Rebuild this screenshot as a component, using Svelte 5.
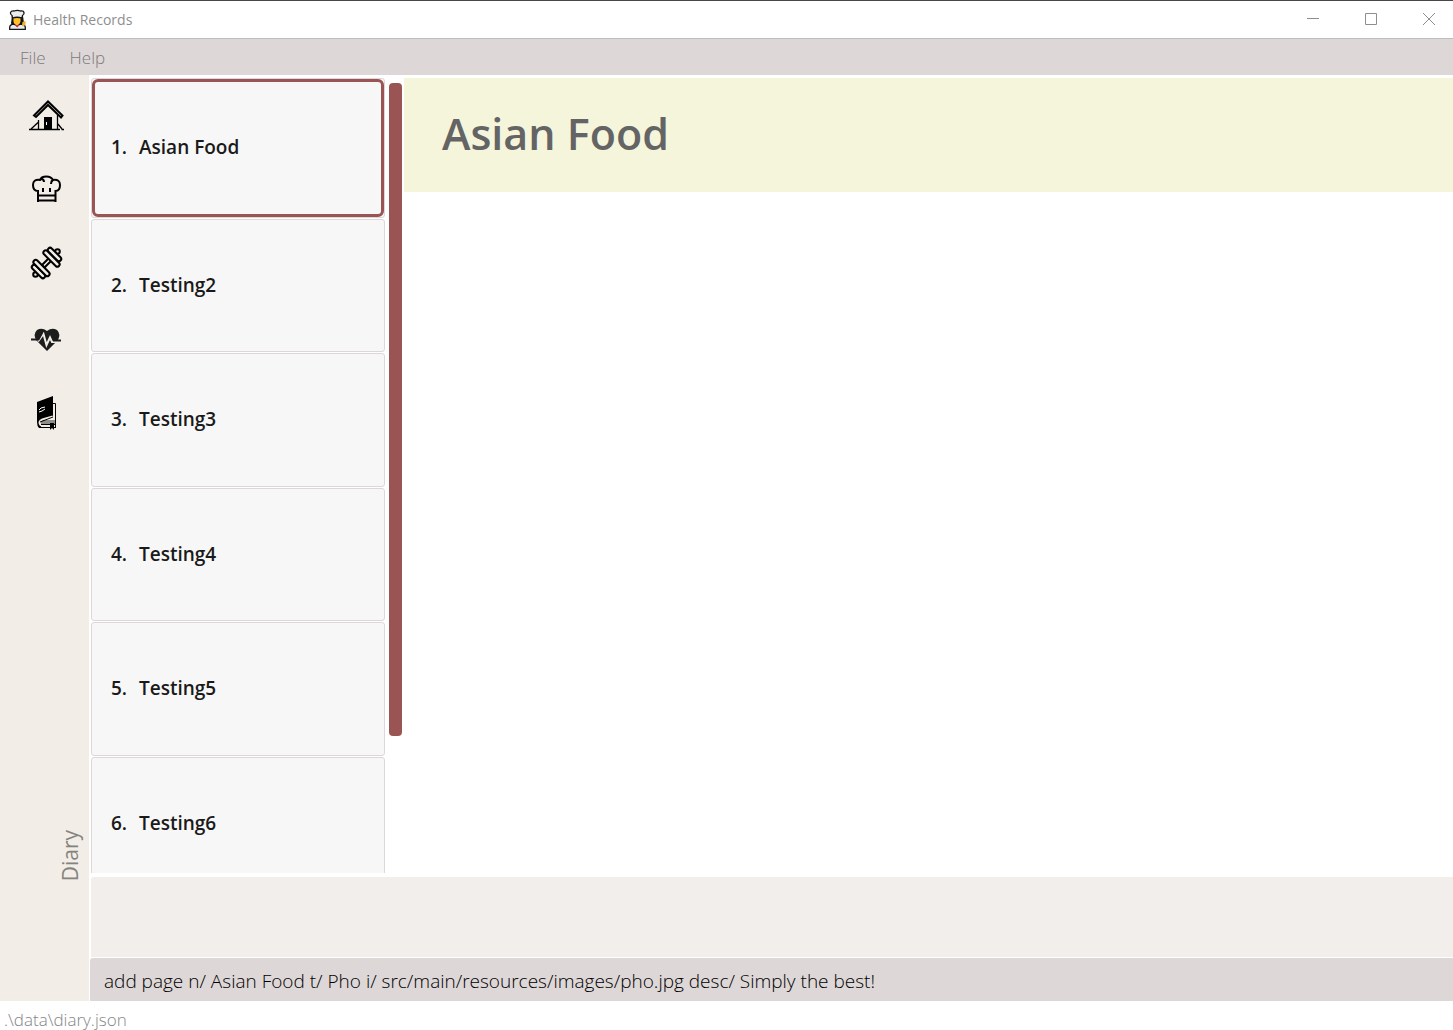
<script>
  const pages = ['Asian Food', 'Testing2', 'Testing3', 'Testing4', 'Testing5', 'Testing6'];
  let selected = $state(0);
  let command = $state('add page n/ Asian Food t/ Pho i/ src/main/resources/images/pho.jpg desc/ Simply the best!');
</script>

<div class="window">
  <header class="titlebar">
    <svg class="logo" viewBox="8 8 20 22" aria-hidden="true">
      <path d="M12 15H23L24 22L22 25H12L11 22Z" fill="#151515" />
      <path d="M9.700 28.300V26Q10 23.500 14 23L17 25L20 23Q25 23.500 25.300 26V28.300Z" fill="#e6ebef" stroke="#151515" stroke-width="1.300" />
      <path d="M13.500 16H20.500V20.500Q20 23 18.500 23.300V24.500H15.500V23.300Q13.700 23 13.500 20.500Z" fill="#ffc02e" />
      <path d="M22.500 21L25.500 20V23.500L23.500 25.500L22 24Z" fill="#f5ae25" />
      <path d="M12.500 17L12 14.500Q10 13.500 10.500 11.500Q11.500 9.500 14 10Q17.500 8.800 20.500 10Q23.500 9.500 24 11.500Q24.500 13.500 22.500 14.500L22 17Q17 15.500 12.500 17Z" fill="#ececec" stroke="#151515" stroke-width="1.300" />
      <path d="M14.500 24H19.500L17.500 26.500Z" fill="#e0342e" />
    </svg>
    <span class="title">Health Records</span>
    <div class="controls">
      <button aria-label="Minimize"><svg viewBox="0 0 12 12"><path d="M0 5.5H12" /></svg></button>
      <button aria-label="Maximize"><svg viewBox="0 0 12 12"><path d="M.5 .5H11.5V11.5H.5Z" /></svg></button>
      <button aria-label="Close"><svg viewBox="0 0 12 12"><path d="M0 0L12 12M12 0L0 12" /></svg></button>
    </div>
  </header>

  <nav class="menubar" aria-label="Menu">
    <button>File</button>
    <button>Help</button>
  </nav>

  <div class="body">
    <aside class="sidebar">
      <button aria-label="Home">
        <svg viewBox="20 90 52 52">
          <path d="M29 129.500H60M61.500 129.500H64M38.500 120V129M31 129L38 122.500M57.500 115V129M58 124L62 129" stroke="#000" stroke-width="1.300" fill="none" />
          <path d="M34 115.500L48 101.500L62.500 115.500L61 117.500L48 105L36 117Z" fill="#f2ede6" stroke="#000" stroke-width="2" />
          <path d="M44 117H52V129H44Z" fill="#000" />
          <path d="M46 122H47V125H46Z" fill="#fff" />
        </svg>
      </button>
      <button aria-label="Recipes">
        <svg viewBox="20 165 52 52">
          <path d="M38 202V191Q33 191 33 185Q33 179 40 180Q41 176.500 46.500 176.500Q51 176.500 53 180Q60 179 60 185Q60 191 55.500 191V202M37 200.500H56.500M38 195.500H56M41 179Q44 179 44 182M53 180Q51 181 51 184" fill="none" stroke="#000" stroke-width="2" />
          <path d="M43 188V192M50 188V192" stroke="#000" stroke-width="2" />
        </svg>
      </button>
      <button aria-label="Exercise">
        <svg viewBox="20 240 52 52">
          <g fill="#f2ede6" stroke="#000" stroke-width="2">
            <path d="M42 265L50 257L52.500 259.500L44.500 267.500Z" />
            <circle cx="57.500" cy="251.500" r="2.300" />
            <circle cx="35.500" cy="274.500" r="2.300" />
            <rect x="-8.500" y="-2.300" width="17" height="4.600" rx="2.300" transform="translate(54.500 254.500) rotate(45)" />
            <rect x="-10.500" y="-2.300" width="21" height="4.600" rx="2.300" transform="translate(51.500 258.500) rotate(45)" />
            <rect x="-8.500" y="-2.300" width="17" height="4.600" rx="2.300" transform="translate(38.500 271.500) rotate(45)" />
            <rect x="-10.500" y="-2.300" width="21" height="4.600" rx="2.300" transform="translate(41.500 268) rotate(45)" />
          </g>
        </svg>
      </button>
      <button aria-label="Health">
        <svg viewBox="20 315 52 52">
          <path d="M47 351L36 340Q33 334 37 330Q42 327 47 331Q52 327 57 330Q61 334 58 340Z" fill="#1e1d1d" />
          <path d="M38 341.500L43.500 334L46.500 345L50 337.500L52 342H58" fill="none" stroke="#f2ede6" stroke-width="2" />
          <path d="M31 339.500H38.500L42 333M53 340.500H61" fill="none" stroke="#1e1d1d" stroke-width="2" />
        </svg>
      </button>
      <button aria-label="Diary">
        <svg viewBox="20 390 52 52">
          <path d="M53 403.500H55.500V427M39 427.500H56M41 424.500H55" fill="none" stroke="#000" />
          <path d="M40 420H55V424H41Z" fill="#8d8d89" />
          <path d="M37 402L53 396V416L41 420Q39 422 40 425L42 428H39Q37 426 37 422Z" fill="#000" />
          <path d="M38.500 422Q39 419.500 42 418.500L52.500 415.500V417.500L43 420Q40 421 40.500 424L42 426.500Q38.500 426 38.500 422Z" fill="#f2ede6" />
          <path d="M40 422L53 417" fill="none" stroke="#000" />
          <path d="M39 410L41 408L45 407M39 412L42 411L45 409" fill="none" stroke="#fff" />
          <path d="M50 423H54V430L52 428L50 430Z" fill="#000" />
        </svg>
      </button>
      <span class="tab">Diary</span>
    </aside>

    <main class="content">
      <div class="upper">
        <ol class="list">
          {#each pages as page, i}
            <li class:selected={selected === i}>
              <button onclick={() => (selected = i)}>
                <span class="num">{i + 1}.</span>
                <span>{page}</span>
              </button>
            </li>
          {/each}
        </ol>
        <div class="track"><div class="thumb"></div></div>
        <section class="page">
          <h1>{pages[selected]}</h1>
        </section>
      </div>
      <div class="result" role="status"></div>
      <input class="command" aria-label="Command" bind:value={command} />
    </main>
  </div>

  <footer>.\data\diary.json</footer>
</div>

<style>
  :global(body) { background: #fff; }
  .window {
    display: flex;
    flex-direction: column;
    height: 100vh;
    font-family: "Segoe UI", "Open Sans", "Noto Sans", sans-serif;
    overflow: hidden;
  }
  button { border: 0; padding: 0; background: none; font: inherit; color: inherit; }
  .titlebar {
    display: flex;
    align-items: center;
    flex: none;
    box-sizing: border-box;
    height: 39px;
    padding-left: 8px;
    border-top: 1px solid #484848;
    border-bottom: 1px solid #bebebe;
  }
  .logo { width: 20px; height: 22px; }
  .title { margin-left: 5px; font-size: 14px; color: #8f8f8f; }
  .controls { display: flex; align-self: stretch; margin-left: auto; margin-right: -5px; padding-bottom: 2px; }
  .controls button { display: flex; align-items: center; justify-content: center; width: 58px; }
  .controls svg { width: 12px; height: 12px; stroke: #8e8e8e; fill: none; }
  .menubar {
    display: flex;
    align-items: center;
    flex: none;
    gap: 24px;
    height: 36px;
    padding-left: 20px;
    background: #ddd7d7;
    color: #7d7a7a;
    font-size: 17px;
    font-weight: 300;
  }
  .body { display: flex; flex: 1; min-height: 0; }
  .sidebar {
    display: flex;
    flex-direction: column;
    flex: none;
    box-sizing: border-box;
    width: 89px;
    padding: 15px 0 120px;
    background: #f2ede6;
  }
  .sidebar button { height: 52px; margin: 0 0 23px 20px; width: 52px; }
  .sidebar svg { display: block; width: 52px; height: 52px; }
  .tab {
    align-self: flex-end;
    margin: auto 5px 0 0;
    writing-mode: vertical-rl;
    transform: rotate(180deg);
    font-size: 21px;
    line-height: 28px;
    color: #858380;
  }
  .content {
    display: flex;
    flex-direction: column;
    flex: 1;
    min-width: 0;
    padding: 3px 0 0 1px;
  }
  .upper { display: flex; flex: 1; min-height: 0; overflow: hidden; margin-left: 1px; }
  .list {
    flex: none;
    width: 294px;
    margin: 0;
    padding: 0;
    list-style: none;
    overflow: hidden;
  }
  .list li {
    box-sizing: border-box;
    height: 133px;
    margin-bottom: 1px;
    border: 1px solid #ddd7d9;
    border-radius: 3px;
    background: #f7f7f7;
  }
  .list li:nth-child(odd) { height: 134px; }
  .list li.selected { height: 140px; }
  .list button {
    display: flex;
    align-items: center;
    box-sizing: border-box;
    width: 100%;
    height: 100%;
    padding: 0 0 2px 19px;
    text-align: left;
    font-size: 19px;
    font-weight: 600;
    color: #1a1a1a;
  }
  .list .selected button { padding-left: 16px; border: 3px solid #9b5454; border-radius: 6px; }
  .num { width: 28px; }
  .track { flex: none; width: 13px; padding: 5px 2px 0 4px; }
  .thumb { height: calc(83% - 3px); border-radius: 4px; background: #9b5454; }
  .page { flex: 1; }
  h1 {
    box-sizing: border-box;
    margin: 0;
    height: 114px;
    padding-left: 38px;
    background: #f5f5dc;
    color: #646464;
    font-size: 43px;
    font-weight: 600;
    line-height: 112px;
  }
  .result { flex: none; height: 80px; margin: 4px 0 1px 1px; border-radius: 3px 0 0 0; background: #f2eeeb; }
  .command {
    flex: none;
    box-sizing: border-box;
    height: 43px;
    padding: 3px 14px 0;
    border: 0;
    border-radius: 3px 0 0 0;
    background: #ddd7d7;
    color: #000;
    font-family: inherit;
    font-size: 19px;
    font-weight: 300;
    outline: none;
  }
  footer {
    flex: none;
    height: 29px;
    padding: 0 4px;
    overflow: hidden;
    color: #858585;
    font-size: 17px;
    font-weight: 300;
    line-height: 38px;
  }
</style>
